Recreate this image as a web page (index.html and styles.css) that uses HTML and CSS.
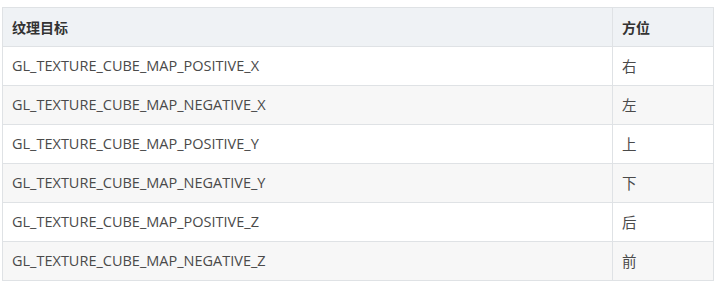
FILE: index.html
```html
<!DOCTYPE html>
<html>
<head>
<meta charset="utf-8">
<link rel="stylesheet" href="styles.css">
</head>
<body>
<table class="tbl">
<thead>
<tr><th class="c1">纹理目标</th><th class="c2">方位</th></tr>
</thead>
<tbody>
<tr><td>GL_TEXTURE_CUBE_MAP_POSITIVE_X</td><td>右</td></tr>
<tr><td>GL_TEXTURE_CUBE_MAP_NEGATIVE_X</td><td>左</td></tr>
<tr><td>GL_TEXTURE_CUBE_MAP_POSITIVE_Y</td><td>上</td></tr>
<tr><td>GL_TEXTURE_CUBE_MAP_NEGATIVE_Y</td><td>下</td></tr>
<tr><td>GL_TEXTURE_CUBE_MAP_POSITIVE_Z</td><td>后</td></tr>
<tr><td>GL_TEXTURE_CUBE_MAP_NEGATIVE_Z</td><td>前</td></tr>
</tbody>
</table>
</body>
</html>
```
FILE: styles.css
```css
html, body { margin: 0; background: #fff; }
body { padding: 7px 0 0 2px; }
.tbl {
  border-collapse: collapse;
  width: 712px;
  font-family: "Open Sans", "Noto Sans CJK SC", sans-serif;
  font-size: 14.5px;
  color: #4a4a4a;
}
.tbl th, .tbl td {
  border: 1px solid #dfe2e5;
  height: 39px;
  box-sizing: border-box;
  padding: 0 9px 1px;
  text-align: left;
}
.tbl th {
  background: #eff2f5;
  color: #333;
  font-weight: bold;
  font-size: 14px;
}
.tbl .c1 { width: 610px; }
.tbl tbody tr:nth-child(even) td { background: #f7f7f7; }
```
